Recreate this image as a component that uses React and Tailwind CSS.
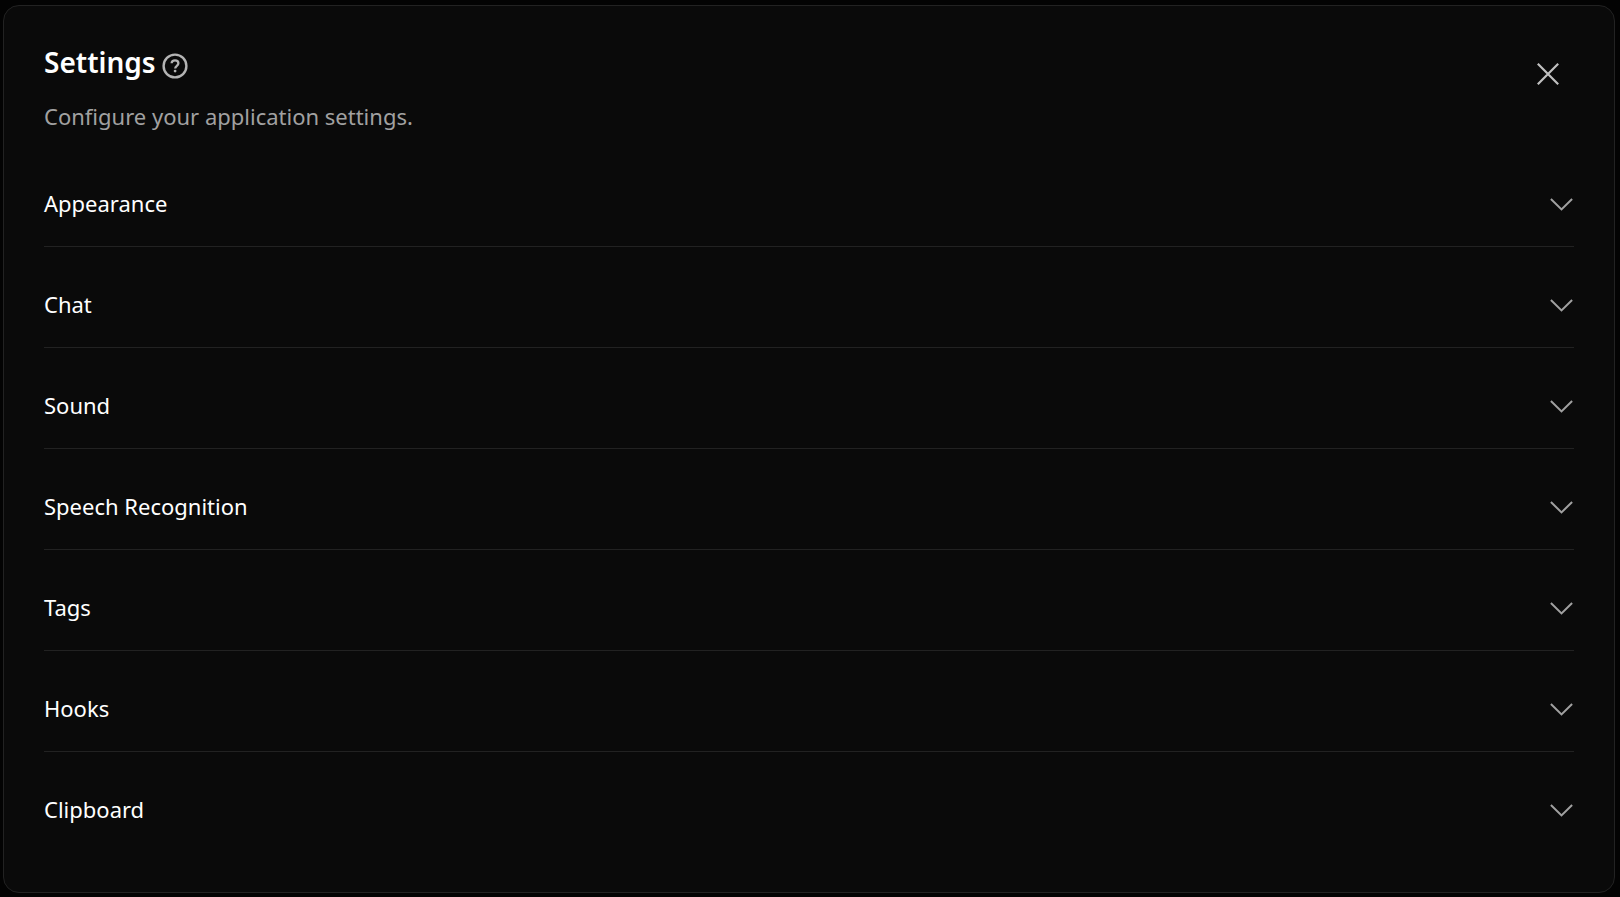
// src/App.jsx
import { useState } from 'react';

const sections = ['Appearance', 'Chat', 'Sound', 'Speech Recognition', 'Tags', 'Hooks', 'Clipboard'];

function HelpIcon() {
  return (
    <svg viewBox="0 0 26 26" className="size-[26px]" fill="none" stroke="currentColor" strokeWidth="2.4" aria-hidden="true">
      <circle cx="13" cy="13" r="11.4" />
      <path d="M9.6 10.3c.1-1.7 1.5-2.9 3.4-2.9s3.4 1.2 3.4 2.9c0 2.4-3.2 2.6-3.2 5.2" strokeWidth="2.3" />
      <circle cx="13.1" cy="18.1" r="1.4" fill="currentColor" stroke="none" />
    </svg>
  );
}

function CloseIcon() {
  return (
    <svg viewBox="0 0 24 24" className="size-6" fill="none" stroke="currentColor" strokeWidth="2.2" aria-hidden="true">
      <path d="M1.8 1.8l20.4 20.4M22.2 1.8l-20.4 20.4" />
    </svg>
  );
}

function ChevronIcon({ open }) {
  return (
    <svg
      viewBox="0 0 24 24"
      className={open ? 'size-6 rotate-180 text-[#a1a1a1]' : 'size-6 text-[#a1a1a1]'}
      fill="none"
      stroke="currentColor"
      strokeWidth="2"
      aria-hidden="true"
    >
      <path d="M.9 8l10.6 10.4L22.1 8" />
    </svg>
  );
}

export default function App() {
  const [openSection, setOpenSection] = useState(null);

  return (
    <div className="min-h-screen flex bg-[#030303] pt-[5px] pb-1 pl-[3px] pr-[5px] font-['Noto_Sans','Open_Sans',sans-serif]">
      <main className="flex-1 rounded-2xl border border-[#222222] bg-[#0a0a0a] px-10 pt-9 text-white">
        <header className="flex items-start justify-between">
          <div>
            <div className="flex items-center gap-1.5">
              <h1 className="text-[28px] leading-10 font-semibold">Settings</h1>
              <button type="button" aria-label="Help" className="mt-2 text-[#b4b4b4]">
                <HelpIcon />
              </button>
            </div>
            <p className="mt-[18px] text-[22px] leading-8 text-[#a1a1a1]">Configure your application settings.</p>
          </div>
          <button type="button" aria-label="Close" className="mt-5 mr-[14px] text-[#c0c0c0]">
            <CloseIcon />
          </button>
        </header>

        <div className="mt-[30px] flex flex-col gap-4">
          {sections.map((name) => (
            <section key={name} className="border-b border-[#222222] last:border-b-0">
              <h2>
                <button
                  type="button"
                  aria-expanded={openSection === name}
                  onClick={() => setOpenSection(openSection === name ? null : name)}
                  className="flex w-full items-center justify-between pt-[25px] pb-[27px] text-[22px] leading-8"
                >
                  {name}
                  <ChevronIcon open={openSection === name} />
                </button>
              </h2>
            </section>
          ))}
        </div>
      </main>
    </div>
  );
}
